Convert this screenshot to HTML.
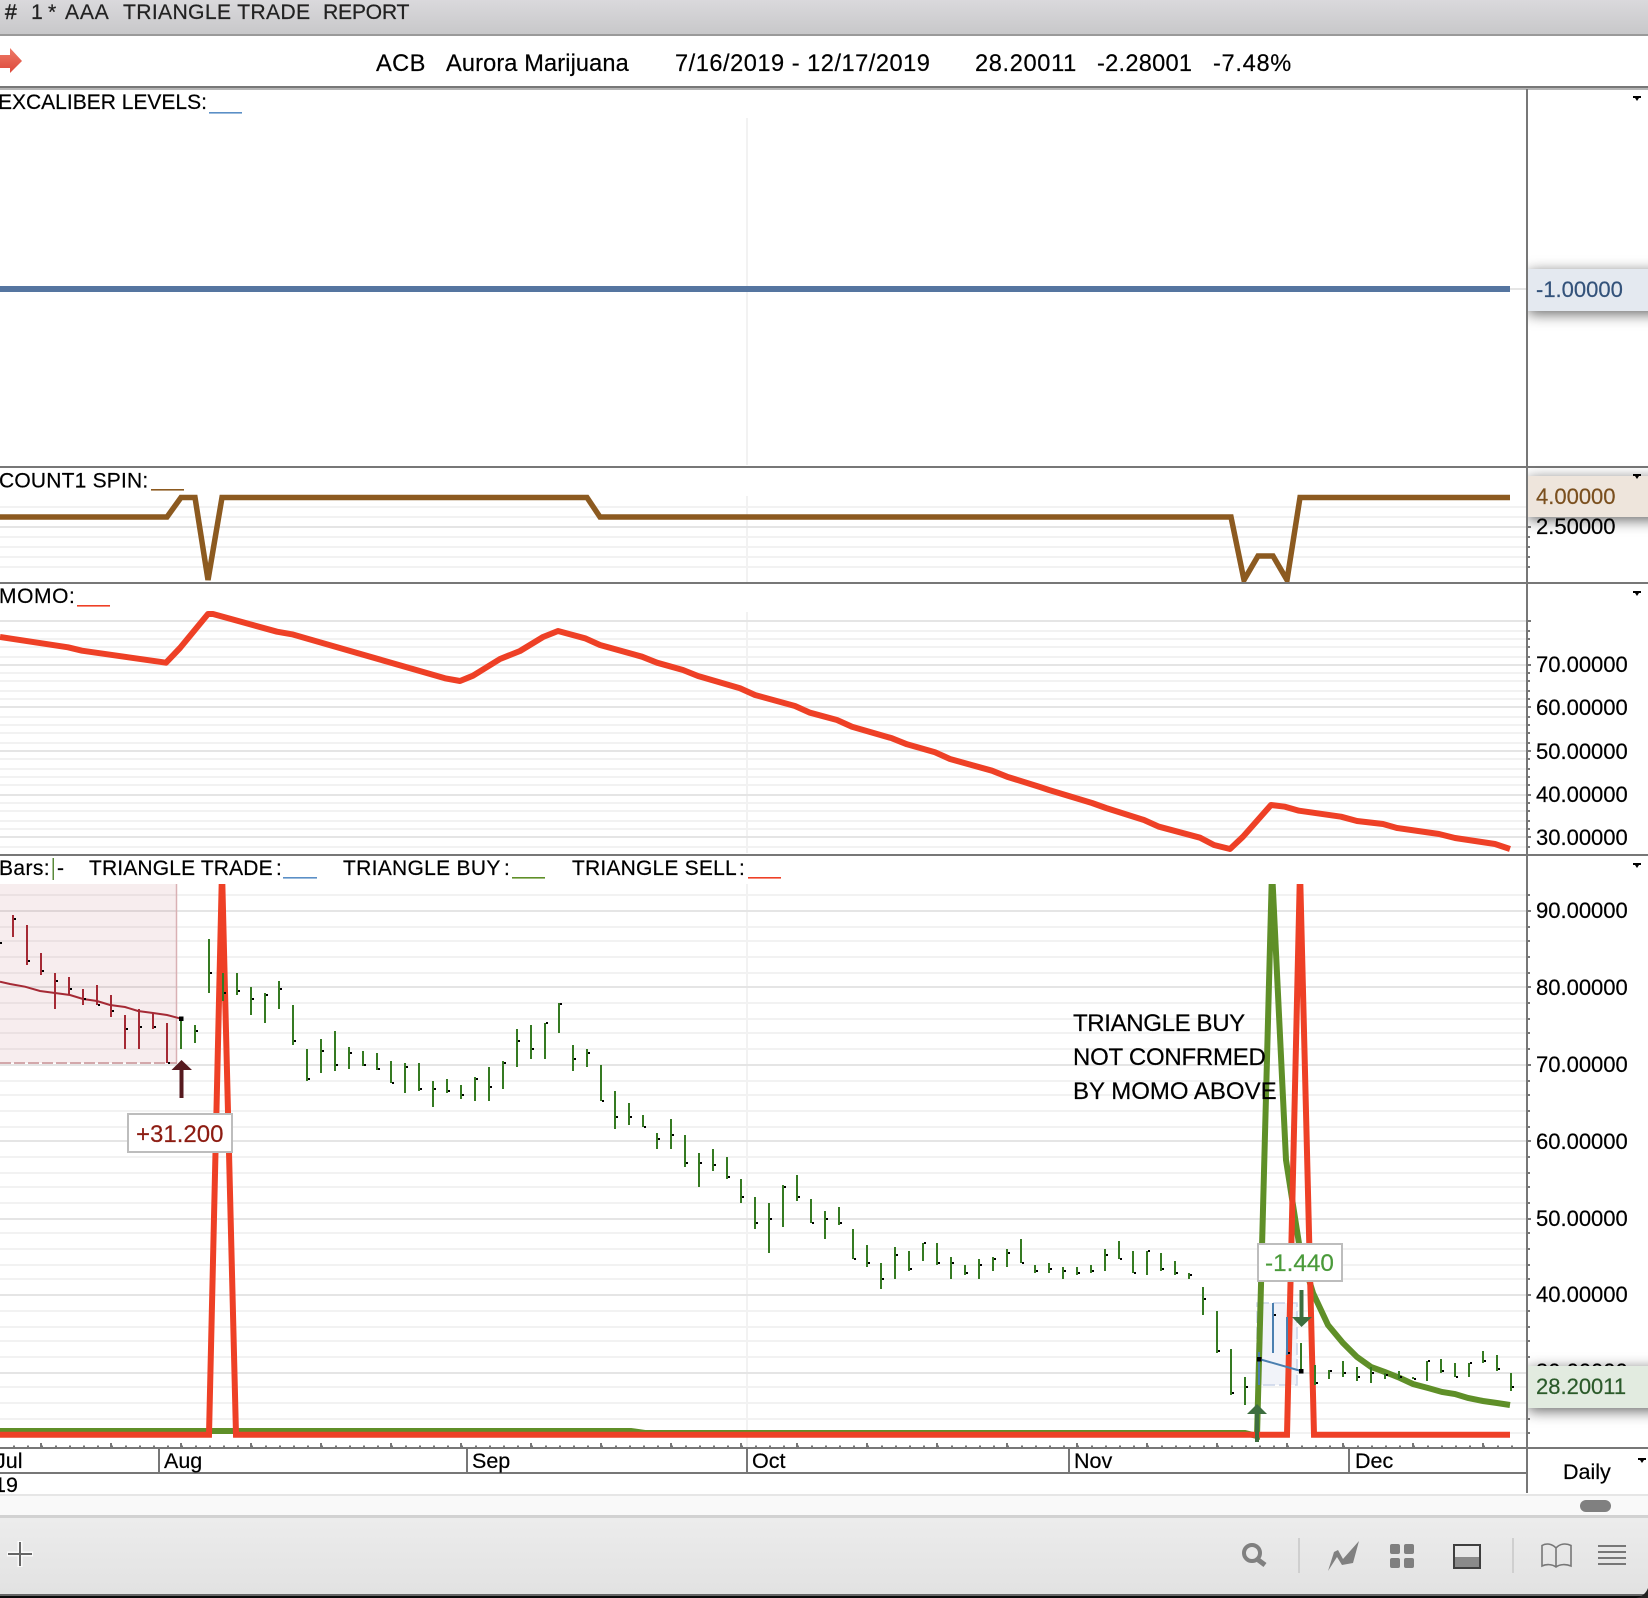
<!DOCTYPE html>
<html><head><meta charset="utf-8"><title>ACB Triangle Trade Report</title>
<style>html,body{margin:0;padding:0;background:#fff}svg{display:block}text{font-family:"Liberation Sans",Arial,sans-serif;font-size:21px;fill:#000;stroke:#000;stroke-width:.2px;white-space:pre}.a{font-size:22px}.t{font-size:21.2px;fill:#222;stroke:#222}.i{font-size:23.6px}.m{font-size:21.5px}.n{font-size:24px}</style>
</head><body>
<svg xmlns="http://www.w3.org/2000/svg" width="1648" height="1598" viewBox="0 0 1648 1598">
<defs>
<linearGradient id="tg" x1="0" y1="0" x2="0" y2="1"><stop offset="0" stop-color="#dad9dc"/><stop offset="1" stop-color="#c8c8ca"/></linearGradient>
<linearGradient id="bg" x1="0" y1="0" x2="0" y2="1"><stop offset="0" stop-color="#ececec"/><stop offset="1" stop-color="#e2e2e2"/></linearGradient>
<linearGradient id="ag" x1="0" y1="0" x2="0" y2="1"><stop offset="0" stop-color="#ee7a68"/><stop offset="1" stop-color="#dd4a3c"/></linearGradient>
<clipPath id="pc"><rect x="0" y="884" width="1527" height="564"/></clipPath>
<clipPath id="sc"><rect x="0" y="470" width="1527" height="112"/></clipPath>
<clipPath id="rc"><rect x="1528" y="90" width="120" height="1357"/></clipPath>
<filter id="sh" x="-20%" y="-80%" width="140%" height="260%"><feDropShadow dx="0" dy="3" stdDeviation="7" flood-color="#000" flood-opacity=".6"/></filter>
</defs>

<!-- title bar -->
<rect x="0" y="0" width="1648" height="34" fill="url(#tg)"/>
<rect x="0" y="34" width="1648" height="2" fill="#9a9a9a"/>
<text class="t" x="5" y="19" style="stroke-width:.5px">#</text>
<text class="t" x="31" y="19">1</text>
<text class="t" x="48" y="19">*</text>
<text class="t" x="65" y="19" letter-spacing=".7">AAA</text>
<text class="t" x="123" y="19" letter-spacing=".3">TRIANGLE TRADE</text>
<text class="t" x="323" y="19" letter-spacing="-.3">REPORT</text>

<!-- info row -->
<polygon points="0,55 10,55 10,48 22,61 10,73 10,68 0,68" fill="url(#ag)"/>
<text class="i" x="376" y="71" letter-spacing=".4">ACB</text>
<text class="i" x="446" y="71" letter-spacing=".12">Aurora Marijuana</text>
<text class="i" x="675" y="71" letter-spacing=".52">7/16/2019 - 12/17/2019</text>
<text class="i" x="975" y="71" letter-spacing=".65">28.20011</text>
<text class="i" x="1097" y="71" letter-spacing=".26">-2.28001</text>
<text class="i" x="1213" y="71" letter-spacing=".7">-7.48%</text>
<rect x="0" y="86" width="1648" height="2" fill="#777"/>
<rect x="0" y="88" width="1648" height="2" fill="#b5b5b5"/>

<!-- vertical grid -->
<path d="M747 118V465M747 496V583M747 612V853M747 884V1447" stroke="#f2f2f2" stroke-width="2" fill="none"/>

<!-- minor grid lines -->
<path d="M0 507H1527M0 537H1527M0 547H1527M0 557H1527M0 567H1527M0 517H1527
M0 631H1527M0 639H1527M0 647H1527M0 657H1527M0 673H1527M0 681H1527M0 691H1527M0 699H1527M0 717H1527M0 725H1527M0 733H1527M0 743H1527M0 759H1527M0 769H1527M0 777H1527M0 785H1527M0 803H1527M0 811H1527M0 821H1527M0 829H1527M0 847H1527
M0 895H1527M0 927H1527M0 941H1527M0 957H1527M0 973H1527M0 1003H1527M0 1019H1527M0 1033H1527M0 1049H1527M0 1081H1527M0 1095H1527M0 1111H1527M0 1127H1527M0 1157H1527M0 1173H1527M0 1187H1527M0 1203H1527M0 1233H1527M0 1249H1527M0 1265H1527M0 1279H1527M0 1311H1527M0 1327H1527M0 1341H1527M0 1357H1527M0 1387H1527M0 1403H1527M0 1419H1527M0 1433H1527" stroke="#f2f2f2" stroke-width="2" fill="none"/>
<!-- major grid lines -->
<path d="M1510 289H1527M0 527H1527M0 621H1527M0 665H1527M0 707H1527M0 751H1527M0 795H1527M0 837H1527M0 911H1527M0 987H1527M0 1065H1527M0 1141H1527M0 1219H1527M0 1295H1527M0 1373H1527" stroke="#e5e5e5" stroke-width="2" fill="none"/>

<!-- axis ticks -->
<path d="M1528 289h3M1528 507h2M1528 527h3M1528 537h2M1528 547h2M1528 557h2M1528 567h2
M1528 621h3M1528 631h2M1528 639h2M1528 647h2M1528 657h2M1528 665h3M1528 673h2M1528 681h2M1528 691h2M1528 699h2M1528 707h3M1528 717h2M1528 725h2M1528 733h2M1528 743h2M1528 751h3M1528 759h2M1528 769h2M1528 777h2M1528 785h2M1528 795h3M1528 803h2M1528 811h2M1528 821h2M1528 829h2M1528 837h3M1528 847h2
M1528 895h2M1528 911h3M1528 927h2M1528 941h2M1528 957h2M1528 973h2M1528 987h3M1528 1003h2M1528 1019h2M1528 1033h2M1528 1049h2M1528 1065h3M1528 1081h2M1528 1095h2M1528 1111h2M1528 1127h2M1528 1141h3M1528 1157h2M1528 1173h2M1528 1187h2M1528 1203h2M1528 1219h3M1528 1233h2M1528 1249h2M1528 1265h2M1528 1279h2M1528 1295h3M1528 1311h2M1528 1327h2M1528 1341h2M1528 1357h2M1528 1373h3M1528 1387h2M1528 1403h2M1528 1419h2M1528 1433h2" stroke="#777" stroke-width="2" fill="none"/>

<!-- panel 1 -->
<text x="-2" y="109">EXCALIBER LEVELS:</text>
<rect x="209" y="112" width="33" height="1.6" fill="#5b8fc6"/>
<rect x="0" y="286" width="1510" height="6" fill="#5575a0"/>

<!-- panel 2 -->
<text x="-1" y="487.500" letter-spacing=".2">COUNT1 SPIN:</text>
<rect x="151" y="489" width="33" height="1.6" fill="#8c5a20"/>
<polyline clip-path="url(#sc)" points="0,517 167,517 181,497.500 195,497.500 208,580 222,497.500 587,497.500 600,517 1231,517 1244,580 1258,556 1273,556 1287,580 1300,497.500 1510,497.500" fill="none" stroke="#8c5a20" stroke-width="5.500" stroke-linejoin="miter"/>

<!-- panel 3 -->
<text x="-1" y="603" letter-spacing=".6">MOMO:</text>
<rect x="77" y="605" width="33" height="1.6" fill="#ee4026"/>
<polyline points="0,637 68,647.300 82,650.700 166,662.700 180,648 208,614 213,614 277,631.700 292,634.300 445,678.300 460,681 473,675.700 500,659 520,651 543,637 558,631 585,638.300 600,645 642,656.700 657,662.700 683,670 698,676 740,688.300 755,695 795,706 810,712.700 837,720 852,726.700 892,738.300 907,744.300 935,752.300 950,759 992,770.700 1007,776.700 1040,787 1049,790 1092,803 1106,808 1144,820 1159,826.700 1200,837.700 1214,845 1230,849 1243,836.700 1271,805 1285,806.700 1299,810.700 1341,816.700 1357,821 1383,824 1397,828 1439,834 1455,838 1495,844 1510,849" fill="none" stroke="#ee4026" stroke-width="6" stroke-linejoin="round"/>

<!-- panel 4 header -->
<text x="-1" y="875" letter-spacing=".4">Bars:</text>
<rect x="52.500" y="858" width="1.500" height="22" fill="#5a8a3a"/>
<text x="57" y="875">-</text>
<text x="89" y="875" letter-spacing=".15">TRIANGLE TRADE</text><text x="276" y="875">:</text>
<rect x="283" y="877" width="34" height="1.6" fill="#5b8fc6"/>
<text x="343" y="875" letter-spacing=".3">TRIANGLE BUY</text><text x="504" y="875">:</text>
<rect x="512" y="877" width="33" height="1.6" fill="#5f8f28"/>
<text x="572" y="875" letter-spacing=".2">TRIANGLE SELL</text><text x="739" y="875">:</text>
<rect x="748" y="877" width="33" height="1.6" fill="#ee4026"/>

<!-- selected regions -->
<rect x="0" y="884" width="177" height="179" fill="#a83c46" fill-opacity=".09"/>
<path d="M176.500 884V1063" stroke="#d9b1b4" stroke-width="1.500"/>
<path d="M0 1063H177" stroke="#d3a8ab" stroke-width="2" stroke-dasharray="11 3"/>
<rect x="1257" y="1303" width="40" height="82" fill="#f1f3f9" stroke="#c9d3e8" stroke-width="1.500" stroke-dasharray="12 4"/>

<!-- green & red indicator lines -->
<g clip-path="url(#pc)" fill="none" stroke-linejoin="miter">
<polyline points="0,1431 631,1431 645,1433 1245,1433 1257,1436 1272,870 1286,1160 1300,1250 1313,1293 1328,1325 1343,1343 1357,1357 1371,1367 1385,1372 1400,1378 1413,1384 1428,1388 1442,1392 1455,1394 1468,1398 1483,1401 1497,1403 1510,1405" stroke="#5f8f28" stroke-width="6"/>
<polyline points="0,1434.700 209,1434.700 222,870 236,1434.700 1287,1434.700 1300,870 1314,1434.700 1510,1434.700" stroke="#ee4026" stroke-width="6"/>
</g>

<!-- red bars -->
<path d="M13 915V937M27 925V965M41 953V975M55 973V1009M69 977V995M83 989V1005M97 985V1005M111 995V1017M125 1015V1049M139 1009V1049M153 1013V1029M167 1023V1063" stroke="#a52a35" stroke-width="2" fill="none"/>
<!-- green bars -->
<path d="M181 1017V1049M195 1025V1043M209 939V993M223 973V1001M237 973V995M251 987V1015M265 993V1023M279 981V1009M293 1005V1045M307 1049V1081M321 1039V1073M335 1031V1071M349 1047V1069M363 1051V1066M377 1053V1070M391 1061V1083
M405 1063V1093M419 1063V1091M433 1081V1107M447 1079V1093M461 1085V1099M475 1077V1101M489 1067V1101M503 1061V1089M517 1029V1067M531 1025V1059M545 1023V1059M559 1003V1033M573 1045V1071M587 1049V1067M601 1065V1101M615 1091V1129M629 1103V1125M643 1115V1127M657 1133V1149M671 1119V1149M685 1135V1167M699 1153V1187M713 1149V1171M727 1157V1179M741 1179V1203M755 1197V1229M769 1203V1253M783 1185V1227M797 1175V1201M811 1199V1223M825 1211V1239M839 1207V1225M853 1229V1259
M867 1245V1267M881 1263V1289M895 1247V1279M909 1251V1271M923 1243V1261M937 1243V1265M951 1257V1279M965 1265V1275M979 1259V1279M993 1257V1271M1007 1249V1267M1021 1239V1263M1035 1265V1273M1049 1263V1273M1063 1267V1279M1077 1267V1275M1091 1265V1273M1105 1249V1271M1119 1241V1259M1133 1251V1273M1147 1251V1275M1161 1253V1271M1175 1261V1275M1189 1273V1279M1203 1287V1315M1217 1311V1353M1231 1349V1395M1245 1377V1405
M1301 1343V1371M1315 1365V1385M1329 1370V1379M1343 1361V1377M1357 1367V1381M1371 1367V1383M1385 1373V1379M1399 1371V1379M1413 1377V1379M1427 1361V1381M1441 1359V1373M1455 1363V1377M1469 1363V1377M1483 1351V1363M1497 1355V1371M1511 1373V1391" stroke="#357a22" stroke-width="2" fill="none"/>
<!-- blue bars -->
<path d="M1259 1352V1385M1273 1303V1353M1287 1317V1355" stroke="#4a7fb0" stroke-width="2" fill="none"/>
<!-- moving average in red zone -->
<polyline points="0,981.700 10,984 25,986.700 40,991 55,993 70,995 83,999 97,1001 110,1005 125,1007 138,1011 153,1013 167,1015 181,1018.700" fill="none" stroke="#a52a35" stroke-width="2"/>
<path d="M1259 1359L1301 1371" stroke="#4a7fb0" stroke-width="2" fill="none"/>
<!-- close ticks -->
<path d="M0 943h2M14 919h2M28 961h2M42 971h2M56 981h2M70 989h2M84 999h2M98 1005h2M112 1011h2M126 1029h2M140 1027h2M154 1027h2M168 1063h2M196 1031h2M210 973h2M224 993h2M238 991h2M252 999h2M266 995h2M280 989h2M294 1041h2M308 1079h2M322 1051h2M336 1065h2M350 1053h2M364 1065h2M378 1069h2M392 1083h2
M406 1067h2M420 1089h2M434 1089h2M448 1091h2M462 1095h2M476 1079h2M490 1087h2M504 1063h2M518 1041h2M532 1049h2M546 1023h2M560 1004h2M574 1059h2M588 1053h2M602 1101h2M616 1117h2M630 1117h2M644 1127h2M658 1139h2M672 1135h2M686 1163h2M700 1163h2M714 1165h2M728 1177h2M742 1197h2M756 1223h2M770 1219h2M784 1187h2M798 1197h2M812 1223h2M826 1219h2M840 1223h2M854 1259h2
M868 1263h2M882 1279h2M896 1255h2M910 1269h2M924 1243h2M938 1263h2M952 1263h2M966 1273h2M980 1265h2M994 1259h2M1008 1253h2M1022 1263h2M1036 1271h2M1050 1269h2M1064 1271h2M1078 1273h2M1092 1271h2M1106 1255h2M1120 1259h2M1134 1273h2M1148 1251h2M1162 1269h2M1176 1273h2M1190 1275h2M1204 1299h2M1218 1351h2M1232 1393h2M1246 1387h2
M1274 1315h2M1288 1353h2M1316 1383h2M1330 1371h2M1344 1373h2M1358 1377h2M1372 1373h2M1386 1375h2M1400 1377h2M1414 1379h2M1428 1361h2M1442 1371h2M1456 1377h2M1470 1363h2M1484 1361h2M1498 1369h2M1512 1387h2" stroke="#000" stroke-width="2" fill="none"/>
<rect x="179" y="1016.500" width="4.500" height="4.500" fill="#000"/>
<rect x="1257" y="1357" width="4.500" height="4.500" fill="#000"/>
<rect x="1299" y="1369" width="4.500" height="4.500" fill="#000"/>

<!-- arrows -->
<polygon points="181.500,1060 192,1070 183.500,1070 183.500,1098 179.500,1098 179.500,1070 171.500,1070" fill="#561a1f"/>
<polygon points="1257,1404 1267,1414 1259,1414 1259,1442 1255,1442 1255,1414 1247,1414" fill="#3d6e3f"/>
<polygon points="1301.500,1327 1292,1317 1299.500,1317 1299.500,1290 1303.500,1290 1303.500,1317 1312,1317" fill="#3d6e3f"/>

<!-- annotation -->
<text class="n" x="1073" y="1031" letter-spacing="-.35">TRIANGLE BUY</text>
<text class="n" x="1073" y="1065" letter-spacing="-.25">NOT CONFRMED</text>
<text class="n" x="1073" y="1099">BY MOMO ABOVE</text>

<!-- value callouts -->
<rect x="128" y="1114" width="104" height="38" fill="#fff" stroke="#bdbdbd" stroke-width="2"/>
<text x="136" y="1142" style="font-size:24px;fill:#8d1c12;stroke:#8d1c12">+31.200</text>
<rect x="1258" y="1244" width="84" height="37" fill="#fff" stroke="#bdbdbd" stroke-width="2"/>
<text x="1265" y="1271" style="font-size:24.300px;fill:#4a9a3a;stroke:#4a9a3a">-1.440</text>

<!-- separators & axis -->
<path d="M0 467H1648M0 583H1648M0 855H1648M0 1448H1648" stroke="#777" stroke-width="2" fill="none"/>
<path d="M1527 89V1493" stroke="#777" stroke-width="2" fill="none"/>

<!-- axis labels -->
<text class="a" x="1536" y="534">2.50000</text>
<text class="a" x="1536" y="672">70.00000</text>
<text class="a" x="1536" y="715">60.00000</text>
<text class="a" x="1536" y="759">50.00000</text>
<text class="a" x="1536" y="802">40.00000</text>
<text class="a" x="1536" y="845">30.00000</text>
<text class="a" x="1536" y="918">90.00000</text>
<text class="a" x="1536" y="995">80.00000</text>
<text class="a" x="1536" y="1072">70.00000</text>
<text class="a" x="1536" y="1149">60.00000</text>
<text class="a" x="1536" y="1226">50.00000</text>
<text class="a" x="1536" y="1302">40.00000</text>

<!-- price labels with shadows -->
<g clip-path="url(#rc)">
<rect x="1528" y="269" width="140" height="42" fill="#e4e9f0" filter="url(#sh)"/>
<rect x="1528" y="476" width="140" height="41" fill="#eee5dc" filter="url(#sh)"/>
<rect x="1528" y="1366" width="140" height="42" fill="#e2ebe0" filter="url(#sh)"/>
</g>
<text class="a" x="1536" y="1379">30.00000</text>
<rect x="1528" y="1366" width="120" height="42" fill="#e2ebe0"/>
<text class="a" x="1536" y="297" style="fill:#33527a;stroke:#33527a">-1.00000</text>
<text class="a" x="1536" y="504" style="fill:#7a4f1e;stroke:#7a4f1e">4.00000</text>
<text class="a" x="1536" y="1394" style="fill:#2b5a2a;stroke:#2b5a2a">28.20011</text>

<!-- dropdown arrows -->
<path d="M1633 96h8v2h-2l-2 3l-2-3h-2zM1633 474h8v2h-2l-2 3l-2-3h-2zM1633 591h8v2h-2l-2 3l-2-3h-2zM1633 863h8v2h-2l-2 3l-2-3h-2zM1638 1458h8v2h-2l-2 3l-2-3h-2z" fill="#000"/>

<!-- time axis -->
<path d="M13 1446.500H1513" stroke="#777" stroke-width="2" stroke-dasharray="2 12" fill="none"/>
<path d="M41 1443v5M111 1443v5M181 1443v5M251 1443v5M321 1443v5M391 1443v5M461 1443v5M531 1443v5M601 1443v5M671 1443v5M741 1443v5M797 1443v5M867 1443v5M937 1443v5M1007 1443v5M1077 1443v5M1147 1443v5M1217 1443v5M1287 1443v5M1343 1443v5M1413 1443v5M1483 1443v5" stroke="#777" stroke-width="2" fill="none"/>
<path d="M0 1473H1527M159 1449V1473M467 1449V1473M747 1449V1473M1069 1449V1473M1349 1449V1473" stroke="#777" stroke-width="2" fill="none"/>
<text class="m" x="-5" y="1468">Jul</text>
<text class="m" x="164" y="1468">Aug</text>
<text class="m" x="472" y="1468">Sep</text>
<text class="m" x="752" y="1468">Oct</text>
<text class="m" x="1074" y="1468">Nov</text>
<text class="m" x="1355" y="1468">Dec</text>
<text class="m" x="-6" y="1492">19</text>
<text class="m" x="1563" y="1479">Daily</text>

<!-- bottom bands -->
<rect x="0" y="1494" width="1648" height="2" fill="#e6e6e6"/>
<rect x="0" y="1496" width="1648" height="19" fill="#f9f9f9"/>
<rect x="1580" y="1500" width="31" height="12" rx="6" fill="#808080"/>
<rect x="0" y="1515" width="1648" height="3" fill="#d2d2d2"/>
<rect x="0" y="1518" width="1648" height="76" fill="url(#bg)"/>
<rect x="0" y="1594" width="1648" height="2" fill="#666"/>
<rect x="0" y="1596" width="1648" height="2" fill="#0a0a0a"/>
<path d="M1648 1588V1598H1636Q1645 1596 1648 1588Z" fill="#222"/>

<!-- toolbar icons -->
<path d="M7 1554H33M20 1541V1567" stroke="#fff" stroke-width="5" stroke-opacity=".8" fill="none"/>
<path d="M8 1554H32M20 1542V1566" stroke="#666" stroke-width="2" fill="none"/>
<circle cx="1252" cy="1553" r="8" fill="none" stroke="#808080" stroke-width="4"/>
<path d="M1257 1559L1265 1565" stroke="#808080" stroke-width="5" fill="none"/>
<path d="M1299 1538V1573M1513 1538V1573" stroke="#cfcfcf" stroke-width="2" fill="none"/>
<polygon points="1328,1571 1334,1552 1338,1550 1343,1559 1359,1541 1353,1563 1342,1565 1337,1557" fill="#808080"/>
<g fill="#7f7f7f"><rect x="1390" y="1544" width="10" height="10" rx="2"/><rect x="1404" y="1544" width="10" height="10" rx="2"/><rect x="1390" y="1558" width="10" height="10" rx="2"/><rect x="1404" y="1558" width="10" height="10" rx="2"/></g>
<rect x="1454" y="1557" width="26" height="11" fill="#8a8a8a"/>
<rect x="1454" y="1545" width="26" height="23" fill="none" stroke="#3f3f3f" stroke-width="2"/>
<path d="M1556 1548C1552 1543.500 1546 1543 1542 1545.500V1566C1546 1564 1552 1564 1556 1567C1560 1564 1566 1564 1571 1566V1545.500C1566 1543 1560 1543.500 1556 1548V1567" fill="none" stroke="#777" stroke-width="1.600"/>
<path d="M1598 1546H1626M1598 1552H1626M1598 1558H1626M1598 1564H1626" stroke="#777" stroke-width="2" fill="none"/>
</svg>
</body></html>
